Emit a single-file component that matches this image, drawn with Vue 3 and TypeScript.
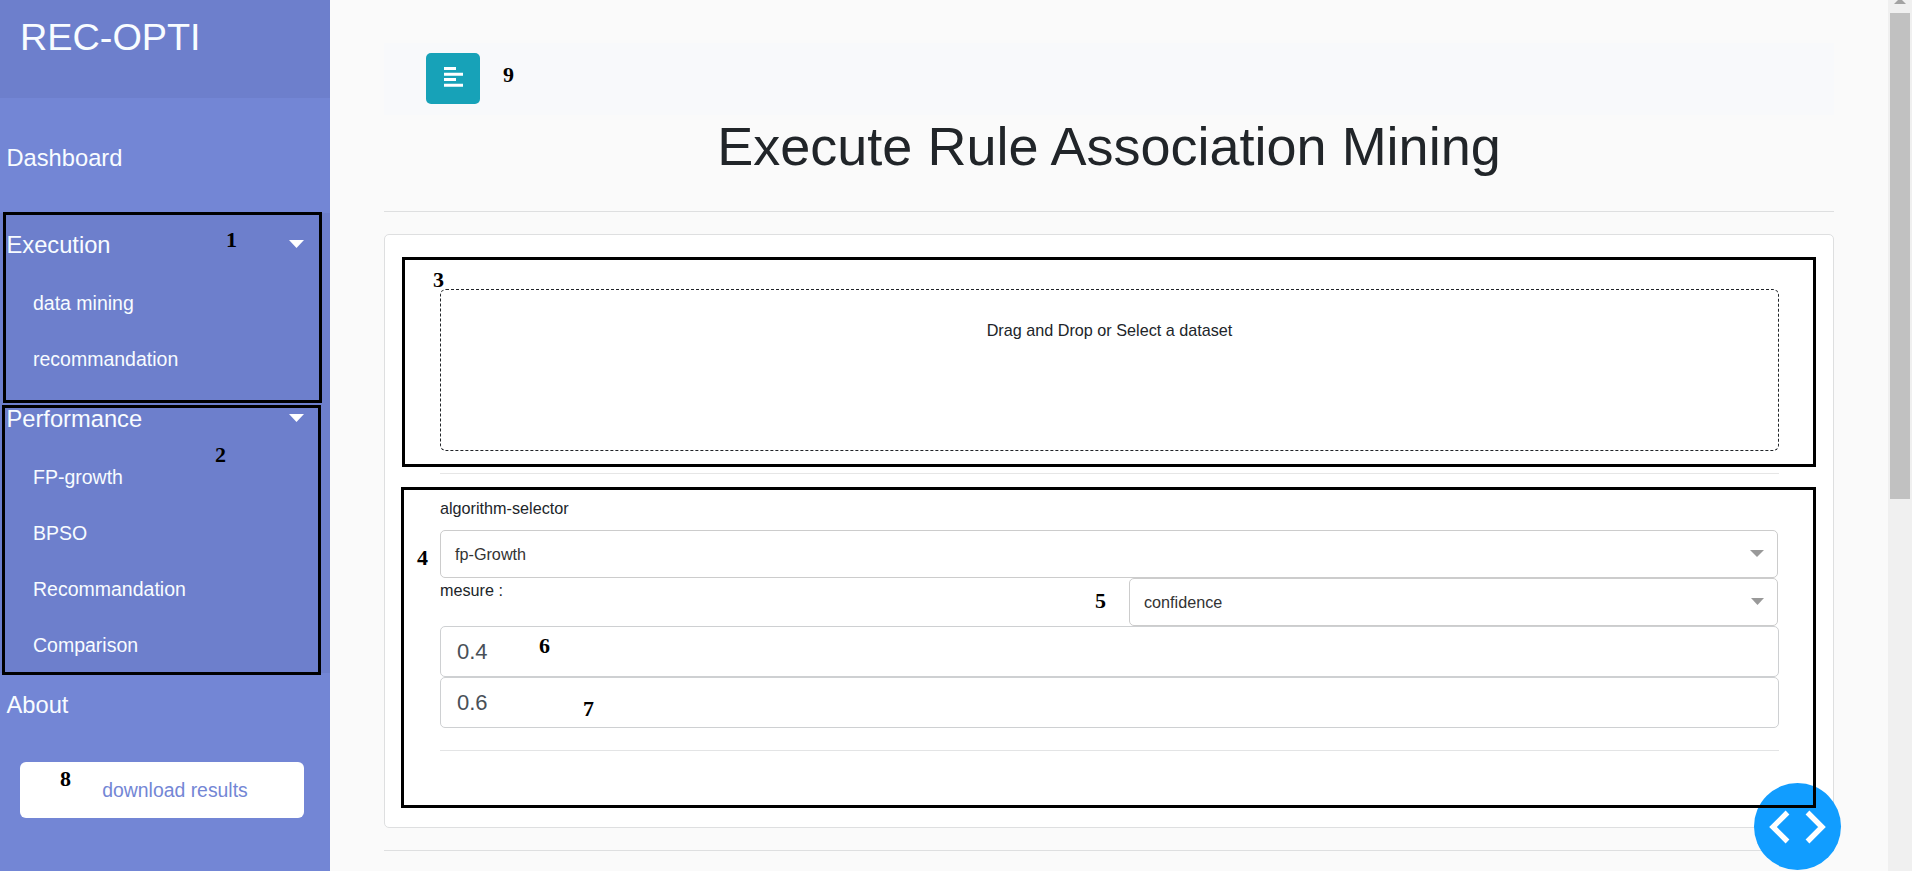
<script setup lang="ts">
import { ref } from 'vue'

interface MenuGroup {
  title: string
  items: string[]
}

interface Note {
  label: string
  x: number
  y: number
}

interface Frame {
  x: number
  y: number
  w: number
  h: number
}

const groups: MenuGroup[] = [
  { title: 'Execution', items: ['data mining', 'recommandation'] },
  { title: 'Performance', items: ['FP-growth', 'BPSO', 'Recommandation', 'Comparison'] },
]

const minSupport = ref('0.4')
const minConfidence = ref('0.6')

const frames: Frame[] = [
  { x: 3, y: 212, w: 319, h: 191 },
  { x: 2, y: 405, w: 319, h: 270 },
  { x: 402, y: 257, w: 1414, h: 210 },
  { x: 401, y: 487, w: 1415, h: 321 },
]

const notes: Note[] = [
  { label: '1', x: 226, y: 229 },
  { label: '2', x: 215, y: 444 },
  { label: '3', x: 433, y: 269 },
  { label: '4', x: 417, y: 547 },
  { label: '5', x: 1095, y: 590 },
  { label: '6', x: 539, y: 635 },
  { label: '7', x: 583, y: 698 },
  { label: '8', x: 60, y: 768 },
  { label: '9', x: 503, y: 64 },
]
</script>

<template>
  <div class="page">
    <aside class="sidebar">
      <header class="brand">REC-OPTI</header>
      <nav class="menu">
        <a class="link dashboard">Dashboard</a>
        <section v-for="group in groups" :key="group.title" class="group">
          <a class="link">
            <span>{{ group.title }}</span>
            <svg class="caret" width="15" height="8" viewBox="0 0 15 8"><path d="M0 0H15L7.5 8Z" /></svg>
          </a>
          <a v-for="item in group.items" :key="item" class="sublink">{{ item }}</a>
        </section>
        <a class="link">About</a>
      </nav>
      <button class="download">download results</button>
    </aside>

    <main class="content">
      <div class="navbar">
        <button class="toggle" aria-label="Toggle menu">
          <svg width="19" height="20" viewBox="0 0 19 20">
            <path d="M0 0H12V3H0ZM0 5.7H19V8.7H0ZM0 11.1H12V14.1H0ZM0 16.8H19V19.8H0Z" />
          </svg>
        </button>
      </div>
      <h1 class="title">Execute Rule Association Mining</h1>
      <hr class="rule" />
      <section class="card">
        <div class="dropzone">Drag and Drop or Select a dataset</div>
        <hr class="rule inner-rule" />
        <label class="field-label">algorithm-selector</label>
        <div class="select">
          <span>fp-Growth</span>
          <svg class="arrow" width="14" height="7" viewBox="0 0 14 7"><path d="M0 0H14L7 7Z" /></svg>
        </div>
        <div class="measure">
          <span class="measure-label">mesure :</span>
          <div class="select measure-select">
            <span>confidence</span>
            <svg class="arrow" width="13" height="7" viewBox="0 0 13 7"><path d="M0 0H13L6.5 7Z" /></svg>
          </div>
        </div>
        <input v-model="minSupport" class="input" />
        <input v-model="minConfidence" class="input" />
        <hr class="rule last-rule" />
      </section>
      <hr class="rule" />
    </main>

    <div class="scrollbar">
      <svg class="scroll-up" width="12" height="4" viewBox="0 0 12 4"><path d="M4 0H8L12 4H0Z" /></svg>
      <div class="thumb"></div>
    </div>

    <button class="debug" aria-label="Debug menu">
      <svg width="57" height="34" viewBox="0 0 57 34">
        <path d="M18.5 2.5L4 17L18.5 31.5M38.5 2.5L53 17L38.5 31.5" />
      </svg>
    </button>

    <div
      v-for="(f, i) in frames"
      :key="'frame' + i"
      class="frame"
      :style="{ left: f.x + 'px', top: f.y + 'px', width: f.w + 'px', height: f.h + 'px' }"
    ></div>
    <span v-for="n in notes" :key="n.label" class="note" :style="{ left: n.x + 'px', top: n.y + 'px' }">{{ n.label }}</span>
  </div>
</template>

<style>
body {
  margin: 0;
  overflow: hidden;
}
</style>

<style scoped>
.page,
.page * {
  box-sizing: border-box;
}
.page {
  position: relative;
  display: flex;
  width: 100%;
  height: 871px;
  overflow: hidden;
  background: #fafafa;
  color: #212529;
  font-family: "Liberation Sans", Arial, sans-serif;
  font-size: 16.2px;
}
button,
input {
  font-family: inherit;
  margin: 0;
}
.sidebar {
  display: flex;
  flex-direction: column;
  flex: none;
  width: 330px;
  background: #7386d5;
  color: #f8fcff;
}
.brand {
  height: 98px;
  padding: 15px 0 0 20px;
  background: #6d7fcc;
  font-size: 37.8px;
  line-height: 44px;
}
.menu {
  display: flex;
  flex-direction: column;
  padding-top: 28px;
}
.link {
  display: flex;
  align-items: center;
  justify-content: space-between;
  height: 62px;
  padding: 3px 26px 0 6.5px;
  font-size: 23.7px;
}
.dashboard {
  margin-bottom: 25px;
}
.group {
  background: #6d7fcc;
}
.caret {
  margin-top: -3px;
  fill: #fff;
}
.sublink {
  display: flex;
  align-items: center;
  height: 56px;
  padding: 1px 0 0 33px;
  font-size: 19.5px;
}
.download {
  width: 284px;
  height: 56px;
  margin: 27px 0 0 20px;
  padding: 1px 0 0 26px;
  border: 0;
  border-radius: 6px;
  background: #fff;
  color: #7386d5;
  font-size: 19.4px;
}
.content {
  flex: 1;
  padding: 43px 54px 0;
}
.navbar {
  display: flex;
  height: 72px;
  padding: 10px 42px;
  background: #f8f9fb;
}
.toggle {
  display: flex;
  width: 54px;
  height: 51px;
  padding: 14px 0 0 18px;
  border: 0;
  border-radius: 5px;
  background: #17a2b8;
}
.toggle svg {
  fill: #fff;
}
.title {
  height: 96px;
  margin: 0;
  text-align: center;
  font-size: 54px;
  font-weight: 400;
  line-height: 62px;
}
.rule {
  height: 1px;
  margin: 0;
  border: 0;
  background: #dedfe0;
}
.card {
  display: flex;
  flex-direction: column;
  height: 594px;
  margin: 22px 0 22px;
  padding: 54px 54px 0 55px;
  border: 1px solid #dedfe0;
  border-radius: 5px;
  background: #fff;
}
.dropzone {
  flex: none;
  height: 162px;
  border: 1px dashed #212529;
  border-radius: 6px;
  text-align: center;
  line-height: 80px;
}
.inner-rule {
  flex: none;
  margin-top: 22px;
  background: #e6e6e6;
}
.field-label {
  height: 56px;
  padding-top: 22px;
  line-height: 24px;
}
.select {
  display: flex;
  align-items: center;
  justify-content: space-between;
  flex: none;
  height: 48px;
  margin-right: 1px;
  padding: 0 13px 0 14px;
  border: 1px solid #ccc;
  border-radius: 5px;
  background: #fff;
  color: #333;
}
.arrow {
  margin-top: -1px;
  fill: #999;
}
.measure {
  display: flex;
  justify-content: space-between;
  height: 48px;
}
.measure-label {
  line-height: 24px;
}
.measure-select {
  width: 649px;
}
.input {
  width: 100%;
  height: 51px;
  padding: 0 16px;
  border: 1px solid #ced0d2;
  border-radius: 5px;
  outline: 0;
  background: #fff;
  color: #495057;
  font-size: 22px;
}
.last-rule {
  margin-top: 22px;
  background: #e3e4e5;
}
.scrollbar {
  flex: none;
  width: 24px;
  padding: 0 2px;
  background: #f0f0f0;
}
.scroll-up {
  display: block;
  margin: 0 0 9px 4px;
  fill: #a3a3a3;
}
.thumb {
  height: 486px;
  background: #c1c1c1;
}
.debug {
  position: absolute;
  right: 71px;
  bottom: 1px;
  display: flex;
  align-items: center;
  justify-content: center;
  width: 87px;
  height: 87px;
  padding: 0;
  border: 0;
  border-radius: 50%;
  background: #119dff;
}
.debug path {
  fill: none;
  stroke: #fff;
  stroke-width: 5.4;
}
.frame {
  position: absolute;
  border: 3px solid #000;
}
.note {
  position: absolute;
  color: #000;
  font: bold 22px/22px "Liberation Serif", "Times New Roman", serif;
}
</style>
